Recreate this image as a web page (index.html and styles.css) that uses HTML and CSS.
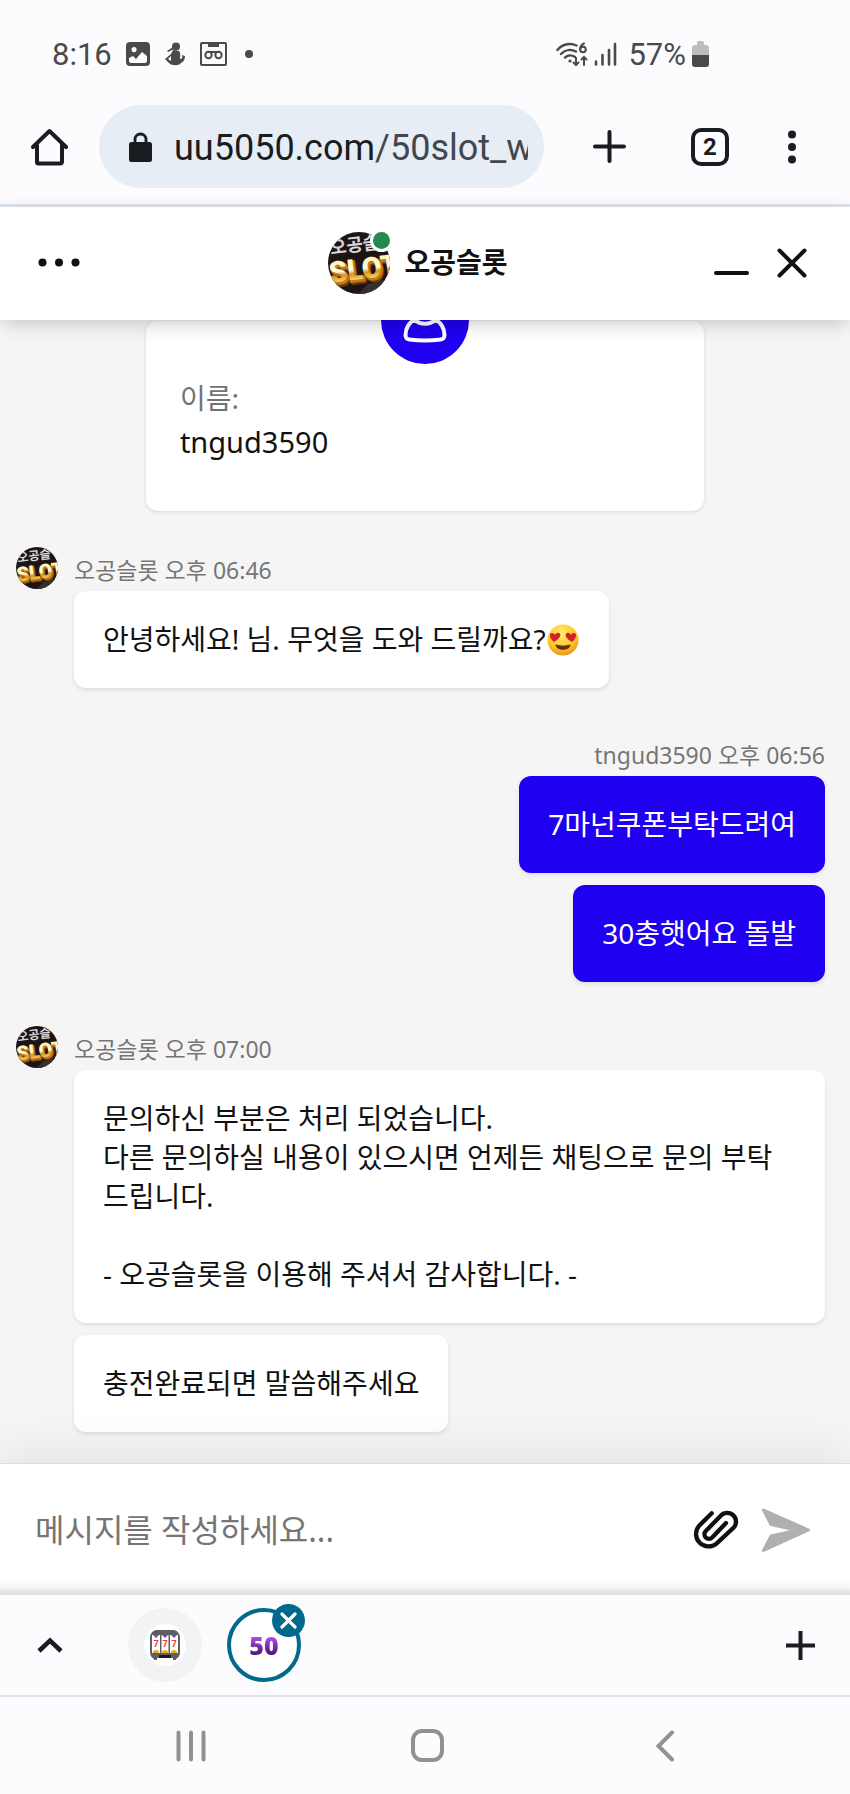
FILE: index.html
```
<!DOCTYPE html>
<html lang="ko">
<head>
    <meta charset="UTF-8">
    <meta name="viewport" content="width=device-width, initial-scale=1.0">
    <title>오공슬롯</title>
    <link rel="stylesheet" href="styles.css">
</head>
<body>

<!-- shared logo -->
<svg class="defs" width="0" height="0" aria-hidden="true">
    <defs>
        <linearGradient id="gold" x1="0" y1="0" x2="0" y2="1">
            <stop offset="0.2" stop-color="#fff3b8"/>
            <stop offset="0.5" stop-color="#fffbe6"/>
            <stop offset="0.62" stop-color="#d9941c"/>
            <stop offset="0.85" stop-color="#ffe08a"/>
        </linearGradient>
        <clipPath id="round"><circle cx="31" cy="31" r="31"/></clipPath>
    </defs>
    <symbol id="logo" viewBox="0 0 62 62">
        <g clip-path="url(#round)">
            <rect width="62" height="62" fill="#1d1416"/>
            <path d="M30 62l10-10 22-6v16z" fill="#34302c"/>
            <g transform="rotate(-7 31 31)">
                <text class="logo-ko" x="4" y="19">오공슬</text>
                <text class="logo-en logo-side" x="2" y="51">SLOT</text>
                <text class="logo-en logo-edge" x="1" y="49">SLOT</text>
                <text class="logo-en" x="0" y="47" fill="url(#gold)">SLOT</text>
            </g>
        </g>
    </symbol>
</svg>

<div class="status-bar">
    <div class="status-left">
        <span>8:16</span>
        <svg width="24" height="24" viewBox="0 0 24 24">
            <path fill-rule="evenodd" fill="#4a4a4a" d="M4 0h16a4 4 0 0 1 4 4v16a4 4 0 0 1-4 4H4a4 4 0 0 1-4-4V4a4 4 0 0 1 4-4zM3 16v3a2 2 0 0 0 2 2h14a2 2 0 0 0 2-2v-5l-5-4-6 7-3-3zM8 5a2.6 2.6 0 1 0 .1 0z"/>
        </svg>
        <svg width="22" height="24" viewBox="0 0 22 24" fill="#4a4a4a">
            <circle cx="12" cy="4.500" r="4"/>
            <path d="M9 5L3 9l1 1 6-3z"/>
            <path fill-rule="evenodd" d="M9 8l6 1c2 3 1 6 1 8 2 0 3-2 2-4l3 1c0 4-2 6-4 7-2 3-9 3-12 0L1 17l6-5zM7 14l-3 3 3 2z"/>
        </svg>
        <svg width="27" height="24" viewBox="0 0 27 24" fill="none" stroke="#4a4a4a" stroke-width="2">
            <rect x="1" y="1" width="25" height="22" rx="1"/>
            <path d="M9 2h9v2H9z" fill="#4a4a4a"/>
            <circle cx="8.500" cy="13" r="3.200"/><circle cx="18.500" cy="13" r="3.200"/>
            <path d="M8 10h11"/>
        </svg>
        <span class="dot"></span>
    </div>
    <div class="status-right">
        <svg width="32" height="25" viewBox="0 0 32 25" fill="none" stroke="#4a4a4a" stroke-width="2.400" stroke-linecap="round">
            <path d="M1.500 8C7 1.500 15 .800 20.500 3.500M5 12c4-4.500 10-5 15-2.500M9 15.500c3-2.500 7-2.500 10-.500"/>
            <circle cx="14" cy="19" r="1.600" fill="#4a4a4a" stroke="none"/>
            <path d="M20 16v7m-2.500-2.500L20 23l2.500-2.500M28 23v-8m-2.500 2.500L28 15l2.500 2.500" stroke-width="2"/>
            <path d="M28 1.500c-3 1.500-4 4-4 6" stroke-width="2"/><circle cx="27" cy="7.500" r="2.800" stroke-width="2"/>
        </svg>
        <svg width="23" height="24" viewBox="0 0 23 24" stroke="#4a4a4a" stroke-width="2.600" stroke-linecap="round">
            <path d="M2 19.500v3M8.500 13v9.500M15 8v14.500M21 2v20.500"/>
        </svg>
        <span class="percent">57%</span>
        <svg width="17" height="26" viewBox="0 0 17 26">
            <path d="M5 2a2 2 0 0 1 2-2h3a2 2 0 0 1 2 2v2h2a3 3 0 0 1 3 3v7H0V7a3 3 0 0 1 3-3h2z" fill="#bdbdbd"/>
            <path d="M0 14h17v9a3 3 0 0 1-3 3H3a3 3 0 0 1-3-3z" fill="#4a4a4a"/>
        </svg>
    </div>
</div>

<div class="toolbar">
    <button class="icon-btn" aria-label="홈">
        <svg width="37" height="38" viewBox="0 0 37 38" fill="none" stroke="#191c20" stroke-width="4" stroke-linecap="round" stroke-linejoin="round">
            <path d="M2 19L18.500 3 35 19M6 17v17a1.500 1.500 0 0 0 1.500 1.500h22A1.500 1.500 0 0 0 31 34V17"/>
        </svg>
    </button>
    <button class="address" aria-label="주소창">
        <svg width="23" height="30" viewBox="0 0 23 30">
            <path d="M6 11V7.500a5.500 5.500 0 0 1 11 0V11" fill="none" stroke="#191c20" stroke-width="2.800"/>
            <rect y="10" width="23" height="20" rx="2.500" fill="#191c20"/>
        </svg>
        <span class="url">uu5050.com<span class="path">/50slot_w</span></span>
    </button>
    <div class="toolbar-actions">
        <button class="icon-btn new-tab" aria-label="새 탭">
            <svg width="33" height="33" viewBox="0 0 33 33" stroke="#191c20" stroke-width="4" stroke-linecap="round">
                <path d="M16.500 2v29M2 16.500h29"/>
            </svg>
        </button>
        <button class="tab-count" aria-label="탭 2개">2</button>
        <button class="icon-btn more" aria-label="더보기">
            <svg width="8" height="34" viewBox="0 0 8 34" fill="#191c20">
                <circle cx="4" cy="4.500" r="4"/><circle cx="4" cy="17" r="4"/><circle cx="4" cy="29.500" r="4"/>
            </svg>
        </button>
    </div>
</div>

<header class="chat-header">
    <button class="icon-btn menu" aria-label="메뉴">
        <svg width="42" height="9" viewBox="0 0 42 9" fill="#111">
            <circle cx="4.500" cy="4.500" r="4"/><circle cx="21" cy="4.500" r="4"/><circle cx="37.500" cy="4.500" r="4"/>
        </svg>
    </button>
    <div class="agent">
        <div class="agent-logo">
            <svg width="62" height="62"><use href="#logo"/></svg>
            <span class="online"></span>
        </div>
        <h1>오공슬롯</h1>
    </div>
    <div class="window-actions">
        <button class="icon-btn" aria-label="최소화">
            <svg width="35" height="30" viewBox="0 0 35 30" stroke="#111" stroke-width="4" stroke-linecap="round"><path d="M2 25h31"/></svg>
        </button>
        <button class="icon-btn" aria-label="닫기">
            <svg width="30" height="30" viewBox="0 0 30 30" stroke="#111" stroke-width="4" stroke-linecap="round"><path d="M2.500 2.500l25 25M27.500 2.500l-25 25"/></svg>
        </button>
    </div>
</header>

<main class="chat">
    <section class="card">
        <div class="card-icon">
            <svg width="44" height="52" viewBox="0 0 44 52" fill="none" stroke="#fff" stroke-width="4">
                <circle cx="22" cy="11" r="10"/>
                <path d="M2.500 41c0-7 4-13 9-15 6 5 15 5 21 0 5 2 9 8 9 15 0 3-1 4-4 4.500-10 1.200-21 1.200-31 0-3-.500-4-1.500-4-4.500z"/>
            </svg>
        </div>
        <p class="label">이름:</p>
        <p class="value">tngud3590</p>
    </section>

    <section class="group">
        <svg class="avatar" width="42" height="42"><use href="#logo"/></svg>
        <div class="messages">
            <div class="meta">오공슬롯 오후 06:46</div>
            <div class="bubble">안녕하세요! 님. 무엇을 도와 드릴까요?<svg class="emoji" width="32" height="32" viewBox="0 0 32 32" role="img" aria-label="하트 눈 얼굴">
                <defs>
                    <radialGradient id="face" cx="0.45" cy="0.3" r="0.75">
                        <stop offset="0" stop-color="#ffef72"/>
                        <stop offset="0.6" stop-color="#ffc928"/>
                        <stop offset="1" stop-color="#e88a1a"/>
                    </radialGradient>
                </defs>
                <circle cx="16" cy="16" r="15.500" fill="url(#face)"/>
                <path d="M7 18C2 14 2 9 5 9c2 0 2.500 1 3 2 1-1.500 2-2.500 4-2 3 1 1 6-5 9zM25 18c5-4 5-9 2-9-2 0-2.500 1-3 2-1-1.500-2-2.500-4-2-3 1-1 6 5 9z" fill="#d3202c"/>
                <path d="M8.500 20.500c5 1.500 10 1.500 15 0 0 7-15 7-15 0z" fill="#6b2a12"/>
            </svg></div>
        </div>
    </section>

    <section class="group mine">
        <div class="messages">
            <div class="meta">tngud3590 오후 06:56</div>
            <div class="bubble">7마넌쿠폰부탁드려여</div>
            <div class="bubble">30충햇어요 돌발</div>
        </div>
    </section>

    <section class="group">
        <svg class="avatar" width="42" height="42"><use href="#logo"/></svg>
        <div class="messages">
            <div class="meta">오공슬롯 오후 07:00</div>
            <div class="bubble">문의하신 부분은 처리 되었습니다.<br>다른 문의하실 내용이 있으시면 언제든 채팅으로 문의 부탁드립니다.<br><br>- 오공슬롯을 이용해 주셔서 감사합니다. -</div>
            <div class="bubble">충전완료되면 말씀해주세요</div>
        </div>
    </section>
</main>

<form class="composer">
    <input type="text" placeholder="메시지를 작성하세요..." aria-label="메시지">
    <button class="icon-btn" type="button" aria-label="파일 첨부">
        <svg width="52" height="46" viewBox="0 0 52 46" fill="none" stroke="#111" stroke-width="4.300" stroke-linecap="round">
            <path d="M21.700 6.300L8.900 19A12.500 12.500 0 0 0 26.500 36.600L43.500 20.800A8.700 8.700 0 0 0 31 8.500L15.800 24A4.500 4.500 0 0 0 22.200 30.500L36 16"/>
        </svg>
    </button>
    <button class="icon-btn" type="submit" aria-label="보내기">
        <svg width="52" height="46" viewBox="0 0 52 46" fill="#b0b0b0" stroke="#b0b0b0" stroke-width="3" stroke-linejoin="round">
            <path d="M3.500 3L48.500 23 3.500 43.500 11 29l26-5.700L11 17.500z"/>
        </svg>
    </button>
</form>

<div class="tab-strip">
    <button class="icon-btn" aria-label="탭 그룹 펼치기">
        <svg width="26" height="16" viewBox="0 0 26 16" fill="none" stroke="#191c20" stroke-width="4.500"><path d="M2 14L13 3.500 24 14"/></svg>
    </button>
    <button class="tab tab-slot" aria-label="슬롯">
        <svg width="42" height="42" viewBox="0 0 42 42">
            <circle cx="21" cy="21" r="21" fill="#fff"/>
            <path d="M12 6h18c4 1 6 4 6 8v14c0 4-2 6-4 7v1h-3v-2H13v2h-3v-1c-2-1-4-3-4-7V14c0-4 2-7 6-8z" fill="#5f5f61"/>
            <path d="M8 11h8v18H8zM17.500 11h7v18h-7zM26 11h8v18h-8z" fill="#fff"/>
            <path d="M9 11h6l-3 3zM18 11h6l-3 3zM27 11h6l-3 3z" fill="#6652d9"/>
            <path d="M9 29a3 3 0 0 1 6 0zM18 29a3 3 0 0 1 6 0zM27 29a3 3 0 0 1 6 0z" fill="#f0a818"/>
            <path d="M15 31h12v3H15z" fill="#1c1c1c"/>
            <text class="seven" x="12" y="23">7</text>
            <text class="seven" x="21" y="23">7</text>
            <text class="seven" x="30" y="23">7</text>
        </svg>
    </button>
    <div class="tab tab-current">
        <button class="fifty" aria-label="50 탭">50</button>
        <button class="tab-close" aria-label="탭 닫기">
            <svg width="17" height="17" viewBox="0 0 17 17" stroke="#fff" stroke-width="3.200" stroke-linecap="round"><path d="M2 2l13 13M15 2L2 15"/></svg>
        </button>
    </div>
    <button class="icon-btn add-tab" aria-label="탭 추가">
        <svg width="29" height="29" viewBox="0 0 29 29" stroke="#191c20" stroke-width="4"><path d="M14.500 0v29M0 14.500h29"/></svg>
    </button>
</div>

<nav class="nav-bar">
    <button class="icon-btn" aria-label="최근 앱">
        <svg width="30" height="32" viewBox="0 0 30 32" stroke="#919193" stroke-width="4" stroke-linecap="round"><path d="M2.500 2.500v27M15 2.500v27M27.500 2.500v27"/></svg>
    </button>
    <button class="icon-btn" aria-label="홈 화면">
        <svg width="33" height="33" viewBox="0 0 33 33" fill="none" stroke="#919193" stroke-width="4"><rect x="2" y="2" width="29" height="29" rx="9"/></svg>
    </button>
    <button class="icon-btn" aria-label="뒤로">
        <svg width="18" height="32" viewBox="0 0 18 32" fill="none" stroke="#919193" stroke-width="4" stroke-linecap="round"><path d="M16 2.500L2.500 16 16 29.500"/></svg>
    </button>
</nav>

</body>
</html>
```
FILE: styles.css
```
* {
    box-sizing: border-box;
}

body {
    margin: 0;
    min-height: 100vh;
    display: flex;
    flex-direction: column;
    background-color: #fcfcff;
    color: #111;
    font-family: "Noto Sans", "Noto Sans CJK KR", sans-serif;
    font-size: 28px;
    line-height: 39px;
}

button {
    padding: 0;
    border: none;
    background: none;
    font: inherit;
    color: inherit;
    cursor: pointer;
}

svg {
    display: block;
    flex-shrink: 0;
}

.defs {
    position: absolute;
}

.icon-btn {
    display: flex;
    align-items: center;
    justify-content: center;
    flex-shrink: 0;
}

/* logo */
.logo-ko {
    font: bold 18px "Noto Sans CJK KR", sans-serif;
    fill: #d8d8dc;
}

.logo-en {
    font: 900 29px Roboto, sans-serif;
}

.logo-side {
    fill: #6e3c08;
    stroke: #6e3c08;
    stroke-width: 2px;
}

.logo-edge {
    fill: #c07c14;
    stroke: #c07c14;
    stroke-width: 2px;
}

/* status bar */
.status-bar {
    display: flex;
    justify-content: space-between;
    align-items: center;
    height: 105px;
    padding: 3px 141px 0 52px;
    font-family: Roboto, sans-serif;
    font-size: 31px;
    color: #4a4a4a;
}

.status-left,
.status-right {
    display: flex;
    align-items: center;
}

.status-left {
    gap: 14px;
}

.status-right {
    gap: 6px;
}

.percent {
    margin-left: 5px;
}

.dot {
    width: 8px;
    height: 8px;
    margin-left: 4px;
    border-radius: 50%;
    background-color: #4a4a4a;
}

/* browser toolbar */
.toolbar {
    display: flex;
    align-items: center;
    padding: 0 49px 16px 31px;
    border-bottom: 3px solid #dde3ea;
}

.address {
    display: flex;
    align-items: center;
    flex: 1;
    min-width: 0;
    height: 83px;
    margin: 0 38px 0 31px;
    padding: 0 16px 0 30px;
    gap: 22px;
    border-radius: 42px;
    background-color: #e6edf4;
    font-family: Roboto, sans-serif;
    font-size: 36px;
    line-height: 48px;
    color: #191c20;
}

.url {
    flex: 1;
    padding-top: 2px;
    overflow: hidden;
    white-space: nowrap;
    text-align: left;
}

.path {
    color: #42474e;
}

.toolbar-actions {
    display: flex;
    align-items: center;
    gap: 54px;
}

.new-tab {
    width: 55px;
}

.tab-count {
    width: 38px;
    height: 38px;
    border: 4px solid #191c20;
    border-radius: 10px;
    font: bold 24px/30px Roboto, sans-serif;
    color: #191c20;
}

.more {
    width: 18px;
}

/* chat header */
.chat-header {
    position: relative;
    z-index: 1;
    display: grid;
    grid-template-columns: 1fr auto 1fr;
    align-items: center;
    height: 113px;
    padding: 0 43px 2px 29px;
    background-color: #fff;
    box-shadow: 0 5px 20px -4px rgba(0, 0, 0, 0.25);
}

.menu {
    justify-self: start;
    margin-left: 9px;
}

.agent {
    display: flex;
    align-items: center;
    gap: 14px;
}

.agent-logo {
    position: relative;
}

.online {
    position: absolute;
    top: -3px;
    right: -3px;
    width: 23px;
    height: 23px;
    border: 3px solid #fff;
    border-radius: 50%;
    background-color: #268750;
}

h1 {
    margin: 0;
    font-size: 28px;
    font-weight: bold;
}

.window-actions {
    display: flex;
    justify-content: flex-end;
    align-items: center;
    gap: 28px;
}

/* chat */
.chat {
    flex: 1;
    display: flex;
    flex-direction: column;
    gap: 44px;
    padding: 1px 25px 31px 16px;
    overflow: hidden;
    background-color: #f5f5f5;
}

.card {
    position: relative;
    align-self: center;
    width: 69%;
    margin: 0 0 -8px 9px;
    padding: 58px 34px 50px;
    border-radius: 12px;
    background-color: #fff;
    box-shadow: 0 1px 4px rgba(0, 0, 0, 0.12);
}

.card p {
    margin: 0;
}

.card .label {
    color: #737373;
}

.card .value {
    margin-top: 4px;
    font-size: 29px;
}

.card-icon {
    position: absolute;
    top: -45px;
    left: 50%;
    display: flex;
    align-items: center;
    justify-content: center;
    width: 88px;
    height: 88px;
    margin-left: -44px;
    border-radius: 50%;
    background-color: #2000f0;
}

.group {
    display: flex;
    align-items: flex-start;
    gap: 16px;
}

.messages {
    flex: 1;
    display: flex;
    flex-direction: column;
    align-items: flex-start;
    padding-top: 3px;
}

.meta {
    margin-bottom: 1px;
    font-size: 23px;
    line-height: 40px;
    color: #757575;
}

.bubble {
    padding: 29px;
    border-radius: 12px;
    background-color: #fff;
    box-shadow: 0 2px 4px rgba(0, 0, 0, 0.1);
}

.bubble + .bubble {
    margin-top: 12px;
}

.mine .messages {
    align-items: flex-end;
}

.mine .bubble {
    background-color: #2000f0;
    color: #fff;
}

.emoji {
    display: inline-block;
    margin: 0 1px;
    vertical-align: -6px;
}

/* composer */
.composer {
    position: relative;
    display: flex;
    align-items: center;
    gap: 18px;
    height: 132px;
    padding: 0 38px 0 35px;
    border-top: 1px solid #ddd;
    background: linear-gradient(to top, #dcdcdc, #f6f6f6 8px, #fff 16px);
    box-shadow: 0 -10px 50px rgba(0, 0, 0, 0.08);
}

.composer input {
    flex: 1;
    min-width: 0;
    padding: 0;
    border: none;
    outline: none;
    background: none;
    font: inherit;
    font-size: 32px;
    line-height: 44px;
}

.composer input::placeholder {
    color: #757575;
    opacity: 1;
}

/* tab strip */
.tab-strip {
    position: relative;
    display: flex;
    align-items: center;
    height: 102px;
    padding: 0 35px 0 37px;
    border-bottom: 2px solid #dde3ea;
    background-color: #fcfcff;
}

.tab {
    display: flex;
    align-items: center;
    justify-content: center;
    width: 74px;
    height: 74px;
    border-radius: 50%;
}

.tab-slot {
    margin: 0 25px 0 65px;
    background-color: #f2f3f5;
}

.seven {
    font: bold 9px Roboto, sans-serif;
    fill: #e8402c;
    text-anchor: middle;
}

.tab-current {
    position: relative;
    border: 4px solid #00698c;
    background-color: #fff;
}

.fifty {
    font: 900 25px/42px "Open Sans", sans-serif;
    color: transparent;
    background: linear-gradient(#b04fe8 30%, #4a1070 75%);
    -webkit-background-clip: text;
    background-clip: text;
}

.tab-close {
    position: absolute;
    top: -8px;
    right: -8px;
    display: flex;
    align-items: center;
    justify-content: center;
    width: 33px;
    height: 33px;
    border-radius: 50%;
    background-color: #00698c;
}

.add-tab {
    margin-left: auto;
}

/* system navigation */
.nav-bar {
    display: grid;
    grid-template-columns: repeat(3, 1fr);
    align-items: center;
    height: 97px;
    padding: 0 67px 0 73px;
}
```
